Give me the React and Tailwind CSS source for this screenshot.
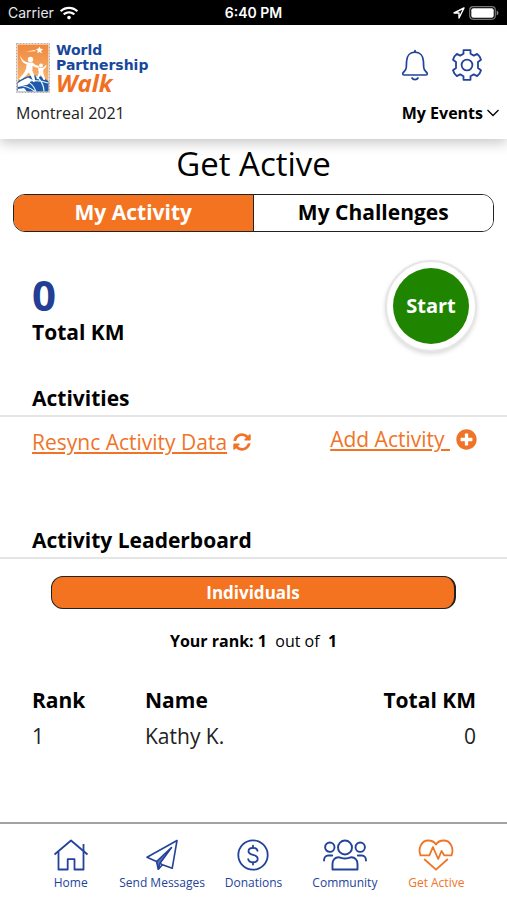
import React, { useState } from 'react';
import { FaSyncAlt, FaPlusCircle, FaWifi } from 'react-icons/fa';

const BellIcon = () => (
  <svg viewBox="0 0 28 32" className="h-8 w-7" fill="none" stroke="currentColor" strokeWidth="1.700" strokeLinecap="round" strokeLinejoin="round">
    <path d="M14 1.500v1.700" />
    <path d="M14 3.200c-5.200 0-8.200 3.900-8.400 8.800l-.3 6.200c-.2 2.300-.8 3.200-2.100 4.300-1 .9-1.500 1.500-1.500 2.300s.6 1.200 1.300 1.200h22c.7 0 1.300-.4 1.300-1.200s-.5-1.400-1.500-2.300c-1.300-1.100-1.900-2-2.100-4.300l-.3-6.200c-.2-4.900-3.200-8.800-8.400-8.800z" />
    <path d="M11 29c.5 1 1.600 1.600 3 1.600s2.500-.6 3-1.600" />
  </svg>
);

const GearIcon = () => (
  <svg viewBox="0 0 32 32" className="h-8 w-8" fill="none" stroke="currentColor" strokeWidth="1.800" strokeLinejoin="round">
    <path d="M12.500 1.200h7v3.500l3.300 1.900 3.400-1.700c1.700 1.200 3.200 3.500 3.800 5.800l-3 2.300v6l3 2.300c-.6 2.300-2.100 4.600-3.800 5.800l-3.400-1.700-3.300 1.900v3.500h-7v-3.500l-3.300-1.900-3.400 1.700c-1.700-1.200-3.200-3.500-3.800-5.800l3-2.300v-6l-3-2.300c.6-2.300 2.100-4.600 3.800-5.800l3.400 1.700 3.300-1.900z" />
    <circle cx="16" cy="16" r="5.400" />
  </svg>
);

const HomeIcon = () => (
  <svg viewBox="0 0 36 32" className="h-8 w-9" fill="none" stroke="currentColor" strokeWidth="1.800" strokeLinejoin="round">
    <path d="M1.500 15.500 18 1.500l16.500 14" />
    <path d="M5.500 12.500v18h9.200V20.200h6.800v10.300h9V12.500" />
    <path d="M30.500 12V5" />
  </svg>
);

const PlaneIcon = () => (
  <svg viewBox="0 0 32 32" className="h-8 w-8" fill="none" stroke="currentColor" strokeWidth="1.600" strokeLinejoin="round">
    <path d="M31 1.500 1 18.200l9.500 4.300 1.800 7.800 4.200-4.500 9.700 3.500z" />
    <path d="M10.500 22.500 25.500 8.500 14 24.200l-1.700 6" />
    <path d="m14 24.200 2.500 1.600" />
    <path d="M10.500 22.500 25.500 8.500 14 24.200l-1.700 6z" fill="currentColor" fillOpacity="0.75" stroke="none" />
  </svg>
);

const DollarIcon = () => (
  <svg viewBox="0 0 32 32" className="h-8 w-8" fill="none" stroke="currentColor" strokeWidth="1.800" strokeLinecap="round">
    <circle cx="16" cy="16" r="14.700" />
    <path d="M20.500 11.800c-.5-1.900-2.200-2.900-4.500-2.900-2.600 0-4.500 1.300-4.500 3.400 0 2.300 2 3 4.500 3.600 2.700.6 4.700 1.400 4.700 3.900 0 2.200-2 3.500-4.700 3.500-2.500 0-4.400-1.100-4.800-3.200" />
    <path d="M16 6.600v2.300M16 23.300v2.300" />
  </svg>
);

const PeopleIcon = () => (
  <svg viewBox="0 0 44 32" className="h-8 w-11" fill="none" stroke="currentColor" strokeWidth="1.900" strokeLinecap="round" strokeLinejoin="round">
    <circle cx="22" cy="8.500" r="7" />
    <circle cx="6.800" cy="8.200" r="4.700" />
    <circle cx="37.200" cy="8.200" r="4.700" />
    <path d="M9.500 30.500v-5.500c0-3.800 2.500-6.700 6-6.700 2 0 3.500 1.200 6.500 1.200s4.500-1.200 6.500-1.200c3.500 0 6 2.900 6 6.700v5.500z" />
    <path d="M1 21.500c0-3 1.800-5 4.200-5h4" />
    <path d="M43 21.500c0-3-1.800-5-4.200-5h-4" />
  </svg>
);

const HeartIcon = () => (
  <svg viewBox="0 0 36 32" className="h-8 w-9" fill="none" stroke="currentColor" strokeWidth="1.800" strokeLinecap="round" strokeLinejoin="round">
    <path d="M2.500 16.300C-.2 9.500 3.300 1.500 10.300 1.500c3.400 0 6 1.200 7.700 4 1.700-2.800 4.300-4 7.700-4 7 0 10.500 8 7.800 14.800h-7.300l-2.700-4.300-3.300 8-5.300-12-3.500 8.300z" />
    <path d="M6.700 20.500 18 30.700l11.300-10.200" />
  </svg>
);

const ArrowIcon = () => (
  <svg viewBox="0 0 12 12" className="h-3 w-3" fill="none" stroke="currentColor" strokeWidth="1.400" strokeLinejoin="round">
    <path d="M11 1 1 6h5v5z" />
  </svg>
);

const BatteryIcon = () => (
  <svg viewBox="0 0 30 14" className="h-3.5 w-[30px]" fill="none">
    <rect x=".7" y=".7" width="25.600" height="12.600" rx="3.500" stroke="#777" strokeWidth="1.200" />
    <rect x="2.300" y="2.300" width="22.400" height="9.400" rx="2" fill="#fff" />
    <path d="M27.700 4.500v5c1-.4 1.700-1.400 1.700-2.500s-.7-2.100-1.700-2.500z" fill="#888" />
  </svg>
);

const LogoMark = () => (
  <svg viewBox="0 0 34 50" className="h-[50px] w-[34px]">
    <defs>
      <linearGradient id="sky" x1="0" y1="0" x2="0" y2="1">
        <stop offset="0" stopColor="#f0883c" />
        <stop offset="1" stopColor="#fac080" />
      </linearGradient>
    </defs>
    <rect x=".5" y=".5" width="33" height="49" fill="#fff" stroke="#9a9a9a" strokeWidth=".8" strokeDasharray="2 1" />
    <rect x="1.500" y="1.500" width="31" height="47" fill="url(#sky)" />
    <path d="M1.500 39c4-4 11-6.500 17-6.500 6 0 10.500 2 14 6v10h-31z" fill="#1e5aa8" />
    <path d="M2 42c8-5 20-6 30-2M8 37c6 2 10 6 12 11.500M20 33c5 4 8 9 8 15.500M2 42.500c7 0 12 2 17 6" fill="none" stroke="#e6f0fa" strokeWidth="1.200" />
    <path d="m5 38 7-3.500 4 2-4 5-6 1.500-4 1v-4zM2 46l6-1 3 3.500H2z" fill="#fff" />
    <path d="m23.500 3.500 1 2.300 2.700.2-2 1.800.7 2.600-2.400-1.400-2.300 1.300.6-2.500-2-1.700 2.600-.3zM19 7 9.500 8.800 19.500 8.300z" fill="#fff" />
    <circle cx="14.500" cy="16.500" r="2.700" fill="#fff" />
    <path d="M4 12c2 5 5 7 8.500 7.500h4c2 2 4 3.200 6.500 3.500l-.4 1.700c-2.600.1-4.300-.7-5.900-1.900l-.4 4.700c1.800 4 2.500 7 3 11l-2.200.4c-1-4-2.400-7-4.500-9.500-2.300 3-4.800 5.500-8.500 7.600l-1-1.400c3.500-3.200 6-6.500 7-10l.4-4.500C7 20.500 5 17.500 4 12z" fill="#fff" />
    <circle cx="25" cy="22.500" r="2" fill="#fff" />
    <path d="m22 24.500 3 .5c2 0 3.500-1 4.700-3l1 .6c-.8 2.200-2 3.400-3.500 4.200l.2 3.400 2 6.500-1.800.4-2.800-5.400-3 4.600-1.400-.7 2.400-5.500z" fill="#fff" />
  </svg>
);

const navItems = [
  { label: 'Home', icon: HomeIcon },
  { label: 'Send Messages', icon: PlaneIcon },
  { label: 'Donations', icon: DollarIcon },
  { label: 'Community', icon: PeopleIcon },
  { label: 'Get Active', icon: HeartIcon },
];

const leaderboard = [{ rank: 1, name: 'Kathy K.', km: 0 }];

const App = () => {
  const [tab, setTab] = useState('activity');

  return (
    <div className="min-h-screen flex flex-col bg-white text-black font-['Open_Sans',sans-serif]">
      {/* Status bar */}
      <div className="grid grid-cols-3 items-center h-[25px] px-2 bg-black text-white text-sm font-['Inter',sans-serif]">
        <div className="flex items-center gap-1.5 text-gray-200">
          Carrier
          <FaWifi className="h-4 w-[18px] text-white" />
        </div>
        <div className="text-center font-semibold">6:40 PM</div>
        <div className="flex items-center justify-end gap-1">
          <ArrowIcon />
          <BatteryIcon />
        </div>
      </div>

      <header className="h-[114px] pl-4 pr-2 pt-[18px] shadow-[0_4px_12px_rgba(0,0,0,0.22)]">
        <div className="flex items-start justify-between">
          <div className="flex gap-1.5">
            <LogoMark />
            <div className="flex flex-col font-['DejaVu_Sans',sans-serif] font-bold text-sm leading-[15px] text-[#17489c]">
              <span className="leading-[15px]">World</span>
              <span className="leading-[15px]">Partnership</span>
              <span className="font-['Open_Sans',sans-serif] italic text-2xl leading-5 text-[#f26f21]">Walk</span>
            </div>
          </div>
          <div className="flex items-center gap-[22px] pt-1.5 pr-4 text-[#23439b]">
            <button aria-label="Notifications"><BellIcon /></button>
            <button aria-label="Settings"><GearIcon /></button>
          </div>
        </div>
        <div className="flex items-center justify-between h-10 text-base">
          <span className="text-[#222]">Montreal 2021</span>
          <button className="flex items-center gap-1 font-bold">
            My Events
            <svg viewBox="0 0 12 8" className="h-2 w-3" fill="none" stroke="currentColor" strokeWidth="1.300">
              <path d="m.5 1 5.500 5.500L11.500 1" />
            </svg>
          </button>
        </div>
      </header>

      <main className="flex-1">
        <h1 className="pt-1 text-center text-[33px] leading-[42px] font-medium">Get Active</h1>

        <div className="mx-[13px] mt-[9px] grid grid-cols-2 h-[38px] rounded-xl border border-[#222] overflow-hidden text-[21px] font-bold">
          <button
            onClick={() => setTab('activity')}
            className={`border-r border-[#222] ${tab === 'activity' ? 'bg-[#f47320] text-white' : 'bg-white'}`}
          >
            My Activity
          </button>
          <button
            onClick={() => setTab('challenges')}
            className={tab === 'challenges' ? 'bg-[#f47320] text-white' : 'bg-white'}
          >
            My Challenges
          </button>
        </div>

        <section className="flex items-start justify-between mt-7 pl-8 pr-[30px]">
          <div className="pt-3">
            <div className="text-[42px] leading-[46px] font-bold text-[#223f94]">0</div>
            <div className="text-[21px] leading-7 font-bold">Total KM</div>
          </div>
          <button className="size-[92px] p-1.5 rounded-full border-2 border-[#e6e6e6] bg-white shadow-[0_2px_4px_rgba(0,0,0,0.15)]">
            <span className="flex items-center justify-center h-full rounded-full bg-[#1f8500] text-white text-xl font-bold">Start</span>
          </button>
        </section>

        <section>
          <h2 className="mt-8 px-8 pb-[3px] text-[21px] leading-7 font-bold border-b-2 border-[#e5e5e5]">Activities</h2>
          <div className="flex items-start justify-between pl-8 pr-[30px] pt-2 text-[21px] leading-7 text-[#f07427]">
            <a href="#resync" className="flex items-center gap-1.5 pt-[3px]">
              <span className="underline underline-offset-2">Resync Activity Data</span>
              <FaSyncAlt className="size-[18px]" />
            </a>
            <a href="#add" className="flex items-center gap-1.5">
              <span className="underline underline-offset-2">Add Activity&nbsp;</span>
              <FaPlusCircle className="size-[21px]" />
            </a>
          </div>
        </section>

        <section>
          <h2 className="mt-[70px] px-8 pb-[3px] text-[21px] leading-7 font-bold border-b-2 border-[#e5e5e5]">Activity Leaderboard</h2>
          <div className="px-[51px] pt-[17px]">
            <button className="w-full h-[33px] rounded-xl border border-r-2 border-[#222] bg-[#f47320] text-white text-[17px] font-bold">
              Individuals
            </button>
          </div>
          <p className="mt-5 text-center text-base leading-6">
            <b>Your rank: 1</b>&nbsp; out of &nbsp;<b>1</b>
          </p>

          <div className="mt-8 pl-8 pr-[31px]">
            <table className="w-full text-[21px] leading-[30px]">
              <thead>
                <tr>
                  <th className="w-[113px] pb-1.5 text-left font-bold">Rank</th>
                  <th className="pb-1.5 text-left font-bold">Name</th>
                  <th className="pb-1.5 text-right font-bold">Total KM</th>
                </tr>
              </thead>
              <tbody>
                {leaderboard.map((row) => (
                  <tr key={row.rank} className="text-[#222]">
                    <td>{row.rank}</td>
                    <td>{row.name}</td>
                    <td className="text-right">{row.km}</td>
                  </tr>
                ))}
              </tbody>
            </table>
          </div>
        </section>
      </main>

      <nav className="sticky bottom-0 grid grid-cols-5 h-[78px] px-[25px] pt-[15px] bg-white border-t-2 border-[#a3a3a3]">
        {navItems.map(({ label, icon: Icon }) => (
          <a
            key={label}
            href="#nav"
            className={`flex flex-col items-center gap-1 text-xs whitespace-nowrap ${label === 'Get Active' ? 'text-[#f07427]' : 'text-[#23439b]'}`}
          >
            <Icon />
            {label}
          </a>
        ))}
      </nav>
    </div>
  );
};

export default App;
